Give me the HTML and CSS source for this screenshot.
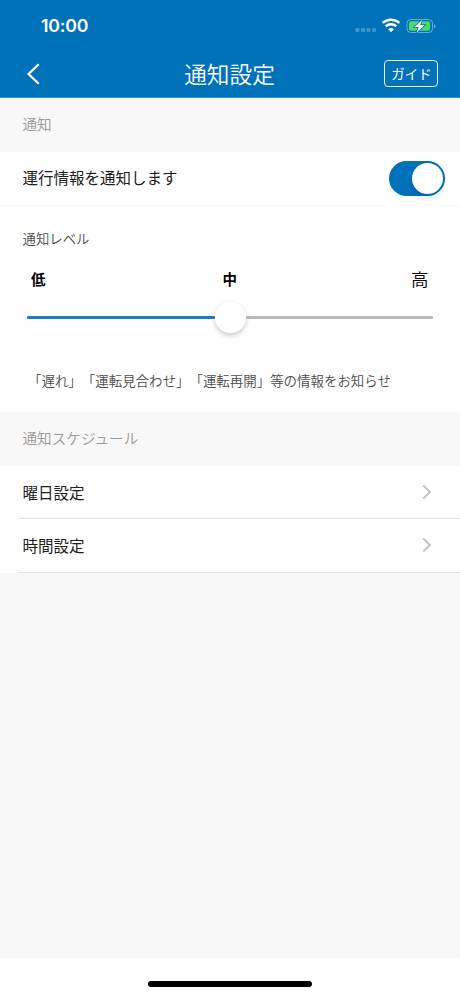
FILE: index.html
```html
<!DOCTYPE html>
<html lang="ja">
<head>
<meta charset="utf-8">
<title>通知設定</title>
<link rel="stylesheet" href="styles.css">
</head>
<body>
<div class="screen">
  <header class="header">
    <div class="status">
      <span class="clock">10:00</span>
      <svg class="indicators" width="84" height="24" viewBox="0 0 84 24">
        <g fill="#3f94cd">
          <rect x="0.5" y="15" width="4" height="4" rx="1"/>
          <rect x="6" y="15" width="4" height="4" rx="1"/>
          <rect x="11.5" y="15" width="4" height="4" rx="1"/>
          <rect x="17" y="15" width="4" height="4" rx="1"/>
        </g>
        <g fill="none" stroke="#fff" stroke-width="2.5">
          <path d="M27.6 9.9a12.5 12.5 0 0 1 16.8 0"/>
          <path d="M30.7 13.3a8 8 0 0 1 10.6 0"/>
        </g>
        <path d="M36 19.3l-2.9-3a4.4 4.4 0 0 1 5.8 0z" fill="#fff"/>
        <rect x="52" y="6.5" width="25.5" height="13" rx="3.8" fill="none" stroke="#69abd8"/>
        <path d="M79 11.2v4.2q1.5-.6 1.5-2.1t-1.5-2.1z" fill="#69abd8"/>
        <rect x="53.9" y="8.3" width="21.2" height="9.4" rx="2.2" fill="#4cd964"/>
        <path d="M67.1 7L59.5 14h4.2l-2 5.4 8-7.4h-4.4z" fill="#fff" stroke="#0072ba" stroke-width="1.6" paint-order="stroke"/>
      </svg>
    </div>
    <div class="nav">
      <svg class="back" width="16" height="24" viewBox="0 0 16 24"><path d="M13.7 2.2L3.5 12l10.2 9.8" fill="none" stroke="#fff" stroke-width="2.2"/></svg>
      <h1 class="title">通知設定</h1>
      <span class="guide">ガイド</span>
    </div>
  </header>
  <h2 class="section">通知</h2>
  <div class="row toggle-row">
    <span>運行情報を通知します</span>
    <span class="toggle"><span class="toggle-knob"></span></span>
  </div>
  <div class="level">
    <p class="level-title">通知レベル</p>
    <div class="level-labels"><span class="low">低</span><span class="mid">中</span><span class="high">高</span></div>
    <div class="slider"><span class="track filled"></span><span class="thumb"></span><span class="track"></span></div>
    <p class="description">「遅れ」「運転見合わせ」「運転再開」等の情報をお知らせ</p>
  </div>
  <h2 class="section">通知スケジュール</h2>
  <div class="list">
    <div class="row link-row">
      <span>曜日設定</span>
      <svg width="10" height="16" viewBox="0 0 10 16"><path d="M1.2 1.5L8 8l-6.8 6.5" fill="none" stroke="#c4c4c6" stroke-width="2"/></svg>
    </div>
    <div class="row link-row">
      <span>時間設定</span>
      <svg width="10" height="16" viewBox="0 0 10 16"><path d="M1.2 1.5L8 8l-6.8 6.5" fill="none" stroke="#c4c4c6" stroke-width="2"/></svg>
    </div>
  </div>
  <footer class="home"><span class="home-bar"></span></footer>
</div>
</body>
</html>
```
FILE: styles.css
```css
* { box-sizing: border-box; }
body {
  margin: 0;
  font-family: "Noto Sans CJK JP", sans-serif;
  color: #1c1c1c;
  text-spacing-trim: space-all;
}
h1, h2, p { margin: 0; font-weight: 400; }
svg { display: block; flex: none; }
.screen {
  width: 460px;
  height: 996px;
  display: flex;
  flex-direction: column;
  background: #f8f8f8;
  overflow: hidden;
}
.header {
  height: 98px;
  background: #0072ba;
  color: #fff;
  border-bottom: 1px solid #3b93ca;
}
.status {
  height: 50px;
  display: flex;
  justify-content: space-between;
  align-items: center;
  padding: 0 21px 0 41px;
}
.clock { padding-top: 1px; font: 600 17.7px/24px Inter, sans-serif; letter-spacing: -0.2px; }
.nav {
  height: 48px;
  display: grid;
  grid-template-columns: 1fr auto 1fr;
  align-items: center;
  padding: 0 22px 0 25px;
}
.title { font-size: 22.7px; line-height: 32px; font-weight: 350; padding: 0 4px 0 0; }
.guide {
  justify-self: end;
  width: 54px;
  height: 27px;
  margin-bottom: 1px;
  border: 1.5px solid #e5f2fa;
  border-radius: 4px;
  font-size: 13.5px;
  font-weight: 400;
  line-height: 25px;
  text-align: center;
  padding-left: 1px;
}
.section {
  height: 54px;
  padding-left: 22.5px;
  font-size: 14.6px;
  line-height: 52px;
  font-weight: 350;
  color: #999;
}
.row {
  display: flex;
  justify-content: space-between;
  align-items: center;
  background: #fff;
  font-size: 15.5px;
  line-height: 24px;
}
.toggle-row {
  height: 54px;
  padding: 0 15px 0 22.5px;
  border-bottom: 1px solid #f9f9f9;
}
.toggle-row > :first-child { padding-bottom: 3px; }
.toggle {
  width: 56px;
  height: 35px;
  padding: 2px;
  border-radius: 18px;
  background: #0072ba;
  display: flex;
  justify-content: flex-end;
}
.toggle-knob {
  width: 31px;
  height: 31px;
  border-radius: 50%;
  background: #fff;
  box-shadow: 0 3px 6px rgba(0, 0, 0, .15);
}
.level { height: 206px; background: #fff; padding-top: 22px; }
.level-title { padding-left: 22.5px; font-size: 13.4px; line-height: 20px; font-weight: 350; color: #4c4c4c; }
.level-labels {
  display: grid;
  grid-template-columns: 1fr auto 1fr;
  height: 28px;
  margin: 17px 31.5px 0 31px;
  line-height: 28px;
  color: #000;
}
.low, .mid { font-size: 14.5px; font-weight: 700; }
.high { font-size: 17.5px; text-align: right; font-weight: 350; }
.slider {
  display: flex;
  align-items: center;
  height: 32px;
  margin: 8px 27px 0;
}
.track { flex: 1; height: 3px; margin-top: 1px; background: #b9b9b9; border-radius: 1px; }
.track.filled { background: #1a7fc0; }
.thumb {
  width: 31px;
  height: 31px;
  border-radius: 50%;
  background: #fff;
  box-shadow: 0 3px 5px rgba(0, 0, 0, .18), 0 0 5px rgba(0, 0, 0, .04);
}
.description {
  margin-top: 37px;
  padding-left: 28px;
  font-size: 13.46px;
  line-height: 20px;
  font-weight: 350;
  color: #4c4c4c;
  white-space: nowrap;
}
.list { background: #fff; padding-left: 18px; }
.link-row {
  height: 53px;
  padding: 0 28.5px 0 4.5px;
  border-bottom: 1px solid #e3e3e3;
}
.link-row:last-child { height: 54px; padding-bottom: 1px; }
.home {
  height: 38px;
  margin-top: auto;
  background: #fff;
  display: flex;
  justify-content: center;
  align-items: flex-start;
  padding-top: 23px;
}
.home-bar { width: 164px; height: 6px; border-radius: 3px; background: #000; }
```
